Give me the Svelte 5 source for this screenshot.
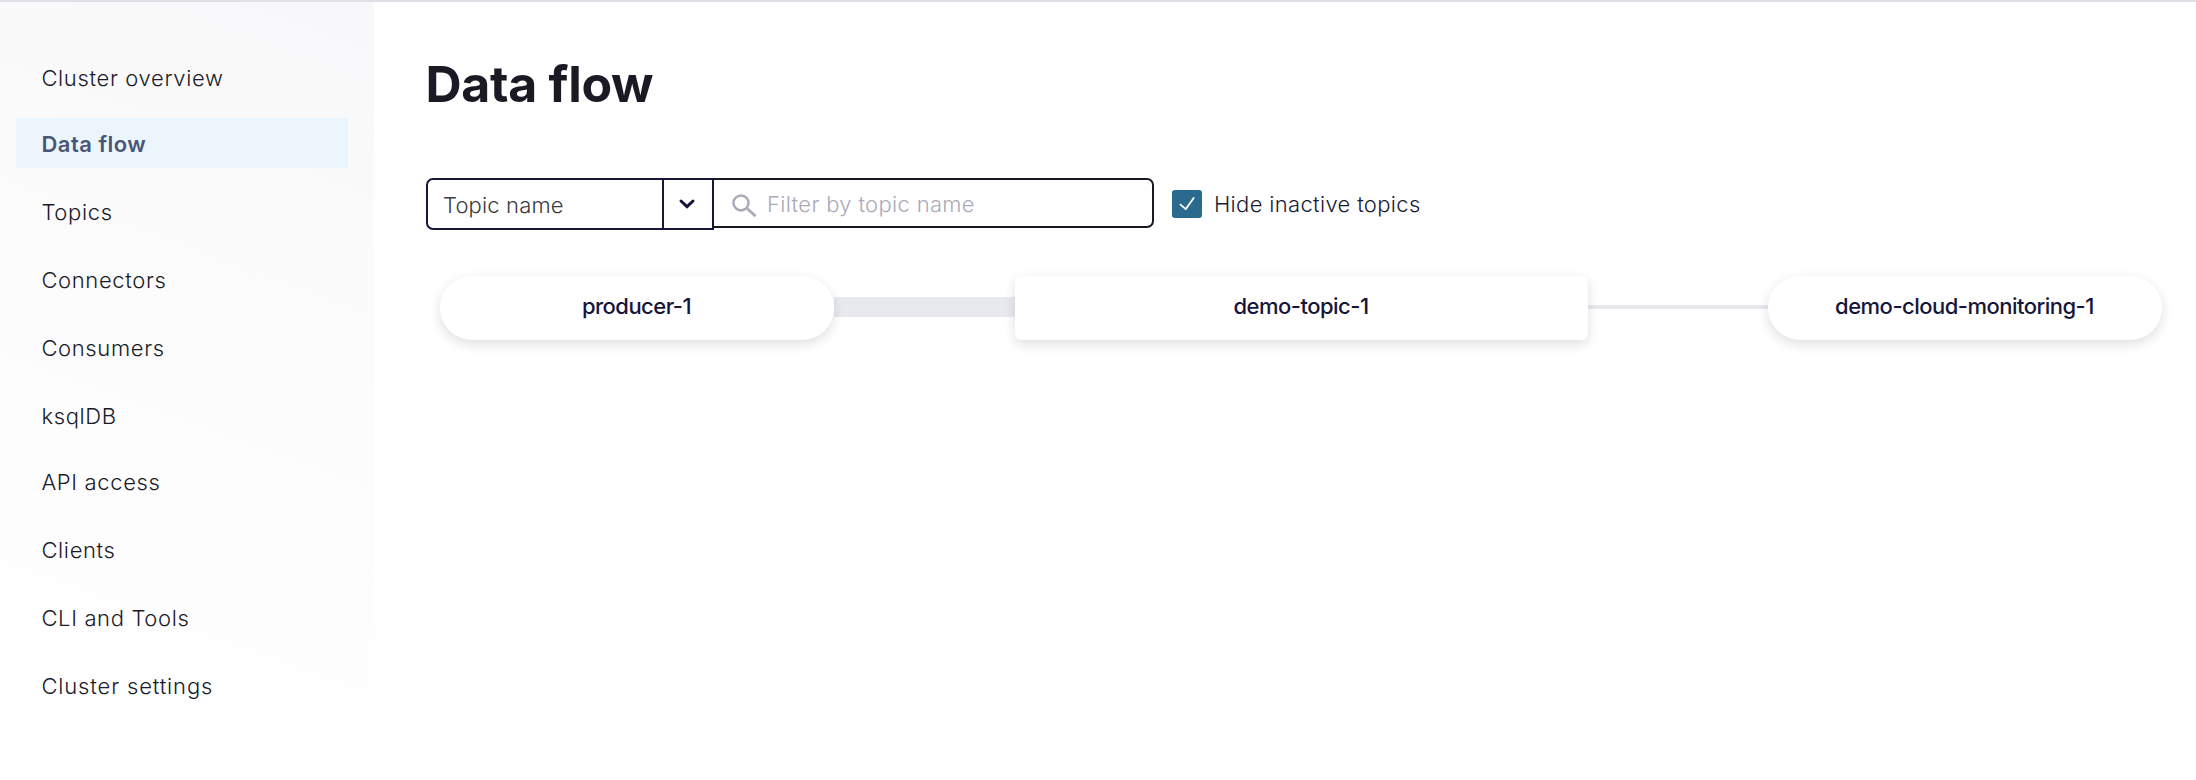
<script>
  const items = [
    { label: 'Cluster overview' },
    { label: 'Data flow', active: true, tight: true },
    { label: 'Topics' },
    { label: 'Connectors' },
    { label: 'Consumers' },
    { label: 'ksqlDB' },
    { label: 'API access', tight: true },
    { label: 'Clients' },
    { label: 'CLI and Tools' },
    { label: 'Cluster settings', wide: true },
  ];
</script>

<div class="page">
  <nav class="sidebar">
    {#each items as item}
      <a class="item" class:active={item.active} class:tight={item.tight} class:wide={item.wide}>{item.label}</a>
    {/each}
  </nav>
  <main>
    <h1>Data flow</h1>
    <div class="filters">
      <div class="select">
        <span class="value">Topic name</span>
        <span class="toggle">
          <svg width="20" height="14" viewBox="0 0 20 14"><path d="M4 4l6 5.6L16 4" fill="none" stroke="#14143a" stroke-width="3" stroke-linecap="round" stroke-linejoin="miter" /></svg>
        </span>
      </div>
      <div class="search">
        <svg width="26" height="24" viewBox="0 0 26 24"><circle cx="9" cy="8.9" r="7.5" fill="none" stroke="#abaab9" stroke-width="2.5" /><path d="M14.3 13.7l9.3 8.4" stroke="#abaab9" stroke-width="2.8" /></svg>
        <span class="placeholder">Filter by topic name</span>
      </div>
      <div class="check">
        <span class="box">
          <svg width="30" height="28" viewBox="0 0 30 28"><path d="M8.5 14.6l5.2 4.5L21.7 8" fill="none" stroke="#fff" stroke-width="1.8" stroke-linecap="round" stroke-linejoin="round" /></svg>
        </span>
        <span class="label">Hide inactive topics</span>
      </div>
    </div>
    <div class="flow">
      <div class="node pill">producer-1</div>
      <div class="link thick"></div>
      <div class="node topic">demo-topic-1</div>
      <div class="link thin"></div>
      <div class="node pill">demo-cloud-monitoring-1</div>
    </div>
  </main>
</div>

<style>
  :global(body) {
    margin: 0;
    background: #fff;
  }
  .page {
    box-sizing: border-box;
    height: 780px;
    width: 2196px;
    border-top: 2px solid #e1e0e7;
    display: flex;
    font-family: Inter, sans-serif;
    font-size: 22px;
    font-weight: 300;
    color: #1a1a29;
    overflow: hidden;
  }
  .sidebar {
    box-sizing: border-box;
    width: 374px;
    flex: none;
    padding: 32px 26px 0 16px;
    background: linear-gradient(200deg, #f8f8fb 0%, #f9f9fa 14%, #fbfbfb 32%, #fdfdfd 60%, #fff 95%);
  }
  .item {
    display: block;
    box-sizing: border-box;
    height: 50px;
    line-height: 53px;
    margin-top: 18px;
    padding-left: 25.4px;
    letter-spacing: 0.65px;
    white-space: nowrap;
  }
  .item.tight {
    margin-top: 16px;
  }
  .item.wide {
    letter-spacing: 0.86px;
  }
  .item.active {
    background: #ebf5fb;
    color: #4a5578;
    font-weight: 600;
    letter-spacing: 0.5px;
  }
  main {
    padding: 52px 0 0 52px;
  }
  h1 {
    margin: 0 0 0 -0.5px;
    font-size: 50px;
    line-height: 60px;
    font-weight: 700;
    letter-spacing: -0.3px;
    color: #1a1a24;
  }
  .filters {
    display: flex;
    align-items: flex-start;
    margin-top: 64px;
    height: 52px;
  }
  .select {
    box-sizing: border-box;
    display: flex;
    width: 288px;
    height: 52px;
    border: 2px solid #16163a;
    border-radius: 7px 0 0 7px;
  }
  .value {
    flex: 1;
    padding-left: 15px;
    line-height: 50px;
    letter-spacing: 0.15px;
    color: #3b3b3b;
  }
  .toggle {
    box-sizing: border-box;
    width: 50px;
    border-left: 2px solid #16163a;
    display: flex;
    align-items: center;
    justify-content: center;
  }
  .toggle svg {
    margin-right: 2px;
  }
  .search {
    box-sizing: border-box;
    display: flex;
    width: 440px;
    height: 50px;
    border: 2px solid #191924;
    border-left: 0;
    border-radius: 0 7px 7px 0;
    padding: 14px 0 0 18px;
  }
  .placeholder {
    margin-left: 9px;
    line-height: 20px;
    letter-spacing: 0.33px;
    color: #abaab9;
  }
  .check {
    display: flex;
    align-items: center;
    height: 52px;
    margin-left: 18px;
  }
  .box {
    width: 30px;
    height: 28px;
    border-radius: 3px;
    background: #2b6a8f;
  }
  .box svg {
    display: block;
  }
  .label {
    margin-left: 12px;
    letter-spacing: 0.33px;
    color: #1a1a38;
  }
  .flow {
    display: flex;
    align-items: center;
    margin: 46px 0 0 14px;
  }
  .node {
    box-sizing: border-box;
    height: 64px;
    line-height: 60px;
    padding-right: 1px;
    text-align: center;
    font-weight: 500;
    letter-spacing: -0.52px;
    color: #16163a;
    background: #fff;
    box-shadow: 0 4px 12px rgba(25, 25, 55, 0.14);
    position: relative;
    z-index: 1;
  }
  .pill {
    width: 394px;
    border-radius: 32px;
  }
  .topic {
    width: 573px;
    border-radius: 6px;
  }
  .link {
    background: #e8e9ef;
  }
  .thick {
    width: 181px;
    height: 20px;
    margin-top: -2px;
  }
  .thin {
    width: 180px;
    height: 4px;
    margin-top: -2px;
  }
</style>
